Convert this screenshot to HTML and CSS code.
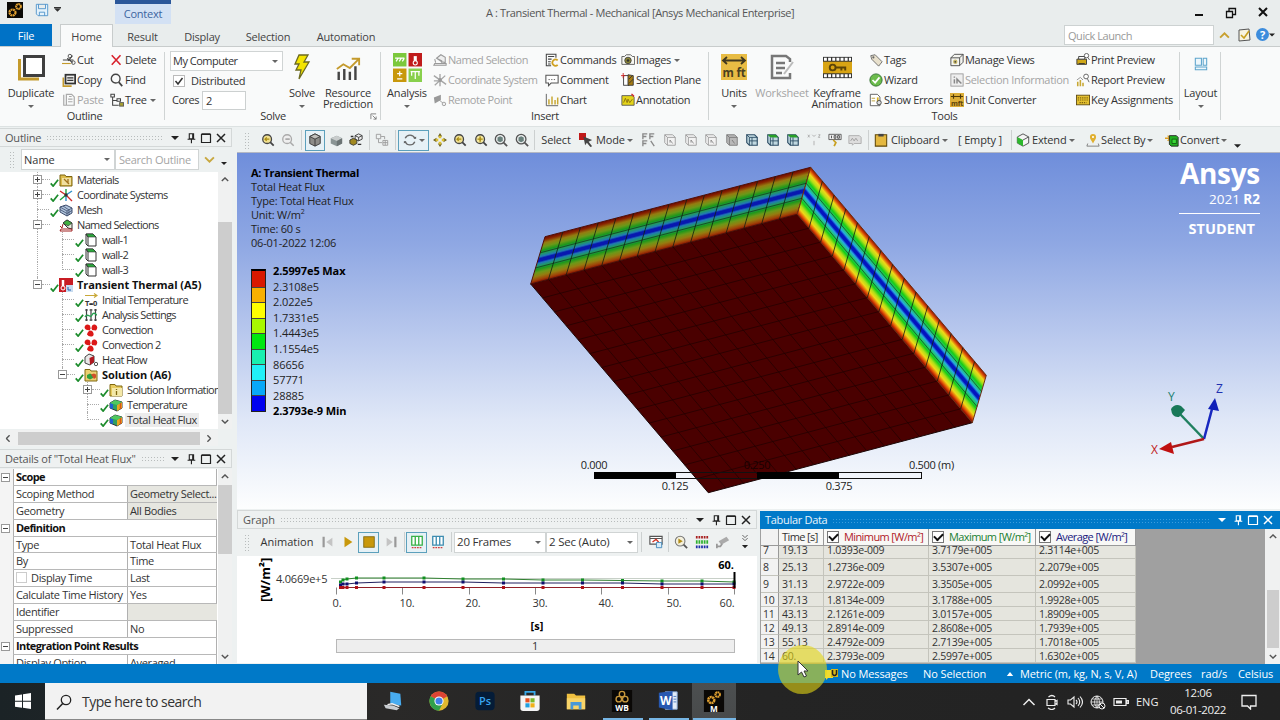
FILE: index.html
```html
<!DOCTYPE html>
<html lang="en">
<head>
    <meta charset="UTF-8">
    <meta name="viewport" content="width=device-width, initial-scale=1.0">
    <title>A : Transient Thermal - Mechanical</title>
    <link rel="stylesheet" href="styles.css">
</head>
<body>

<!-- icon set -->
<svg class="defs">
    <symbol id="gears" viewBox="0 0 16 16"><rect width="16" height="16" fill="#0b0a06"/><circle cx="5.5" cy="10.5" r="3" fill="none" stroke="#e0a030" stroke-width="2.2" stroke-dasharray="1.900 .5"/><circle cx="11.500" cy="4.500" r="2.400" fill="none" stroke="#e0a030" stroke-width="2" stroke-dasharray="1.600 .4"/></symbol>
    <symbol id="save" viewBox="0 0 16 16"><path d="M1.500 1.500h13v13h-11l-2-2zM4 1.500v5h8v-5M5 14.500v-4h6v4" fill="#e4f2fb" stroke="#4a90c8"/></symbol>
    <symbol id="caret" viewBox="0 0 8 4"><path d="M0 0h8L4 4z" fill="currentColor"/></symbol>
    <symbol id="pin" viewBox="0 0 12 14"><path d="M4 2h5v6H4zM2 8.500h9M6.500 8.500V13M8 2v6" fill="none" stroke="currentColor" stroke-width="1.300"/></symbol>
    <symbol id="max" viewBox="0 0 12 12"><path d="M1.500 2.500h9v8h-9zM1.500 1.800h9" fill="none" stroke="currentColor" stroke-width="1.200"/></symbol>
    <symbol id="close" viewBox="0 0 12 12"><path d="M2 2l8 8M10 2l-8 8" fill="none" stroke="currentColor" stroke-width="1.500"/></symbol>
    <symbol id="up" viewBox="0 0 10 6"><path d="M1 5l4-4 4 4" fill="none" stroke="currentColor" stroke-width="1.700"/></symbol>
    <symbol id="down" viewBox="0 0 10 6"><path d="M1 1l4 4 4-4" fill="none" stroke="currentColor" stroke-width="1.700"/></symbol>

    <symbol id="duplicate" viewBox="0 0 28 28"><path d="M2.500 6v20H22" fill="none" stroke="#c49a2c" stroke-width="3"/><rect x="7.500" y="3.500" width="19" height="19" fill="#fff" stroke="#3f3f3f" stroke-width="3"/></symbol>
    <symbol id="cut" viewBox="0 0 16 16"><path d="M1 8h12M6 6l6 5M12 3L7 9" stroke="#444" stroke-width="1.200"/><circle cx="9" cy="3.500" r="2" fill="none" stroke="#444"/><circle cx="13" cy="11" r="2" fill="none" stroke="#444"/><path d="M0 12h10" stroke="#c49a2c" stroke-width="1.300"/></symbol>
    <symbol id="copy" viewBox="0 0 16 16"><path d="M1.500 5v10H11" fill="none" stroke="#c49a2c" stroke-width="1.800"/><rect x="4" y="2" width="11" height="10" fill="#eee" stroke="#333" stroke-width="2"/><path d="M6 5.500h7M6 8.500h7" stroke="#333" stroke-width="1.500"/></symbol>
    <symbol id="paste" viewBox="0 0 16 16"><path d="M2 2v12h3M5 1.500h6l3 3V14H5z M7 7h5M7 10h5M8 4h3" fill="none" stroke="#aaa" stroke-width="1.400"/></symbol>
    <symbol id="delete" viewBox="0 0 16 16"><path d="M2 2.500l10 11M12 2.500l-10 11" stroke="#d8202c" stroke-width="1.800"/></symbol>
    <symbol id="find" viewBox="0 0 16 16"><circle cx="6.500" cy="6.500" r="5" fill="none" stroke="#444" stroke-width="1.600"/><path d="M10 10.500l4 4.500" stroke="#444" stroke-width="2"/></symbol>
    <symbol id="treeic" viewBox="0 0 16 16"><path d="M1 1.500h4v3H1zM3 5v9h7M3 8.500h5M8 6.500h4v3H8z" fill="none" stroke="#444" stroke-width="1.200"/><rect x="11" y="11" width="4.500" height="4" fill="#a8a030" stroke="#555"/></symbol>
    <symbol id="bolt" viewBox="0 0 20 28"><path d="M7 2h9l-4 7h5L7 26l2-9H4l3-6H3z" fill="#f4e400" stroke="#6c6a20" stroke-width="1.300"/></symbol>
    <symbol id="resource" viewBox="0 0 28 28"><path d="M4 27V18M10 27V15M16 27V18M22 27V12" stroke="#444" stroke-width="2.600"/><path d="M2 15l7-5 7 4 9-9M18 4h8v7" fill="none" stroke="#c49a2c" stroke-width="2"/></symbol>
    <symbol id="analysis" viewBox="0 0 28 28"><rect width="13" height="13" fill="#7cc83c"/><rect x="15" width="13" height="13" fill="#c01c1c"/><rect y="15" width="13" height="13" fill="#c8980c"/><rect x="15" y="15" width="13" height="13" fill="#88d04c"/><path d="M2 5h9M3 8l2-3M6 8l2-3M9 8l2-3M4 20h5M6.500 17.500v5M4 25h5M21.500 18v7M18 18v4M25 18v4M17 18h9" stroke="#fff" stroke-width="1.200"/><path d="M21.500 3v6" stroke="#fff" stroke-width="3"/><circle cx="21.500" cy="9.500" r="2" fill="#c01c1c" stroke="#fff"/></symbol>
    <symbol id="named" viewBox="0 0 16 16"><path d="M4 6l5-4 5 3v6l-4-1zM4 6l6 3v3M2 7l1 4M1 14h14v-2H2z" fill="#eee" stroke="#999" stroke-width="1.200"/></symbol>
    <symbol id="csys" viewBox="0 0 16 16"><path d="M1 3l14 10M8 1v14M2 14L14 3M1 9h5" stroke="#a5a5a5" stroke-width="1.500"/><circle cx="8" cy="8" r="2.200" fill="#999"/></symbol>
    <symbol id="remote" viewBox="0 0 16 16"><path d="M1 5l8-3v6l-7 4z" fill="#999"/><path d="M7 8l5 4" stroke="#999"/><circle cx="12.500" cy="12.500" r="2" fill="#eee" stroke="#999"/></symbol>
    <symbol id="commands" viewBox="0 0 16 16"><path d="M7 14.500H1.500v-13h11v4M3.500 4h7M3.500 7h4M3.500 10h3M3.500 12.500h3" fill="none" stroke="#444" stroke-width="1.200"/><path d="M14.500 8.500a3.500 3.500 0 1 0 0 5" fill="none" stroke="#cfa020" stroke-width="2"/></symbol>
    <symbol id="comment" viewBox="0 0 16 16"><path d="M1 2.500h14v9H7l-3 3v-3H1z" fill="#fff" stroke="#555" stroke-width="1.200"/><path d="M4 7.500h8" stroke="#555" stroke-dasharray="1.500 1.500"/></symbol>
    <symbol id="chart" viewBox="0 0 16 16"><path d="M1.500 1v13.500H15" fill="none" stroke="#555"/><path d="M4.500 13V7M8 13V4M11.500 13V8M14.500 13V5" stroke="#c8a834" stroke-width="1.700"/></symbol>
    <symbol id="camera" viewBox="0 0 16 16"><path d="M1 4h3l2-2h5l2 2h2.500v9H1z" fill="#f8f8f4" stroke="#555"/><circle cx="8" cy="8.500" r="3.700" fill="#8a8434" stroke="#444"/><circle cx="8" cy="8.500" r="1.500" fill="#333"/></symbol>
    <symbol id="section" viewBox="0 0 16 16"><rect x="3" y="3" width="6" height="11" fill="#fff" stroke="#333"/><path d="M8 2l6 1v11H8z" fill="#a87c10" stroke="#333"/><path d="M9 7l4-4M9 12l5-5" stroke="#333"/><path d="M0 3h5M2.500 0v6" stroke="#d02020"/></symbol>
    <symbol id="annot" viewBox="0 0 16 16"><path d="M1 3h12l2 2v9H1z" fill="#e4d418" stroke="#555"/><path d="M3 11l2-5 2 5 1-4 2 4 3-4" fill="none" stroke="#866c10"/><path d="M12 1l3 3" stroke="#d02020" stroke-width="1.500"/></symbol>
    <symbol id="units" viewBox="0 0 28 28"><rect width="26" height="26" x="1" y="1" fill="#e8bc44"/><path d="M3 7.500h22M7 4L3 7.500l4 3.500M21 4l4 3.500-4 3.500" fill="none" stroke="#403820" stroke-width="1.800"/><text x="14" y="24" text-anchor="middle" font-size="11.500" font-weight="700" fill="#4a4020">m ft</text></symbol>
    <symbol id="worksheet" viewBox="0 0 28 28"><path d="M22 9V6l-4-3H4v22h18v-5M8 10h9M8 15h9M8 20h6" fill="none" stroke="#777" stroke-width="2.500"/><path d="M16 21l9-12" stroke="#bbb" stroke-width="2"/></symbol>
    <symbol id="keyframe" viewBox="0 0 30 22"><rect width="30" height="22" fill="#333"/><path d="M1 2.500h28M1 19.500h28" stroke="#fff" stroke-width="3" stroke-dasharray="3 1.300"/><rect y="5" width="30" height="12" fill="#d8a414"/><circle cx="10" cy="11" r="3" fill="none" stroke="#5c4408" stroke-width="2"/><path d="M13 11h10v3M19 11v3" fill="none" stroke="#5c4408" stroke-width="2"/></symbol>
    <symbol id="tag" viewBox="0 0 16 16"><path d="M2 3l5-1 8 8-4 5-8-8z" fill="#e8e0cc" stroke="#666"/><circle cx="5" cy="5" r="1.200" fill="#666"/></symbol>
    <symbol id="wizard" viewBox="0 0 16 16"><circle cx="8" cy="8" r="7" fill="#6cbc4c" stroke="#2c6c2c"/><path d="M4 8l3 3 5-6" fill="none" stroke="#fff" stroke-width="2"/></symbol>
    <symbol id="errors" viewBox="0 0 16 16"><path d="M1.500 1.500h8l3 3v10h-11z" fill="#fff" stroke="#555"/><path d="M3 6h4M3 9h4" stroke="#b89828"/><path d="M10 5v5" stroke="#d8b020" stroke-width="2"/><circle cx="11.500" cy="11" r="2.500" fill="#ddd" stroke="#444"/></symbol>
    <symbol id="views" viewBox="0 0 16 16"><path d="M1 5.500h10v9H1zM1 5.500l4-4h10v9l-4 4M11 5.500l4-4" fill="#f4f4f0" stroke="#444"/><circle cx="6" cy="10" r="2.500" fill="#c8b868"/><circle cx="6" cy="10" r="1" fill="#444"/></symbol>
    <symbol id="selinfo" viewBox="0 0 16 16"><rect x="1" y="1" width="14" height="14" fill="#eee" stroke="#999"/><path d="M5 7v5M5 4v1.500M8 12V7l5 5" fill="none" stroke="#888" stroke-width="1.700"/></symbol>
    <symbol id="unitconv" viewBox="0 0 16 16"><rect width="16" height="16" fill="#dcae38"/><path d="M1 4h14M4 1.500v5M12 1.500v5" stroke="#4c3808" stroke-width="1.300"/><text x="8" y="14.500" font-size="8" font-weight="700" text-anchor="middle" fill="#5c440c">mft</text></symbol>
    <symbol id="print" viewBox="0 0 16 16"><path d="M1 7h11v6H1z" fill="#d0a818" stroke="#333"/><path d="M3 4h7v3H3zM3 12h7" fill="#fff" stroke="#333"/><circle cx="12" cy="3" r="2.500" fill="#fff" stroke="#555"/><path d="M13.500 5l2 3" stroke="#555"/></symbol>
    <symbol id="report" viewBox="0 0 16 16"><path d="M2 15v-5M5 15V8M8 15v-4" stroke="#c8a834" stroke-width="1.800"/><path d="M1 8l4-3 3 3" stroke="#888" fill="none"/><circle cx="11.500" cy="4" r="2.700" fill="#fff" stroke="#555"/><path d="M13 6.500l2 4" stroke="#555"/></symbol>
    <symbol id="keys" viewBox="0 0 16 16"><rect x=".5" y="2.500" width="15" height="11" fill="#e4c030" stroke="#5c4810"/><path d="M2 5.500h12M2 8h12M4 11h8" stroke="#80640c" stroke-width="1.300" stroke-dasharray="1.500 1"/></symbol>
    <symbol id="layout" viewBox="0 0 16 16"><path d="M1.500 1.500h7v8h-7zM10.500 1.500h4v8h-4zM1.500 11.500h13v3h-13z" fill="#eef7fc" stroke="#5ca4cc" stroke-width="1.200"/></symbol>

    <symbol id="zoomy" viewBox="0 0 16 16"><circle cx="7" cy="7" r="5" fill="#f0e090" stroke="#444" stroke-width="1.500"/><path d="M10.500 10.500l4 4" stroke="#444" stroke-width="2"/><path d="M9.500 7H4.500M6.500 5l-2 2 2 2" fill="none" stroke="#a88c10" stroke-width="1.300"/></symbol>
    <symbol id="zoomfit" viewBox="0 0 16 16"><circle cx="7" cy="7" r="5" fill="#f4e8a0" stroke="#444" stroke-width="1.500"/><path d="M10.500 10.500l4 4" stroke="#444" stroke-width="2"/><path d="M4 7h6M7 4v6" stroke="#a88c10" stroke-width="1.700"/></symbol>
    <symbol id="zoomg" viewBox="0 0 16 16"><circle cx="7" cy="7" r="5" fill="#eee" stroke="#aaa" stroke-width="1.500"/><path d="M10.500 10.500l4 4M5 7h5" stroke="#aaa" stroke-width="1.800"/></symbol>
    <symbol id="zoomb" viewBox="0 0 16 16"><circle cx="7" cy="7" r="5.500" fill="#e8ecec" stroke="#555" stroke-width="1.500"/><path d="M11 11l4 4" stroke="#555" stroke-width="2"/><path d="M4 5.200L7 3.700l3 1.500v3.800L7 10.500 4 9z" fill="#68807c"/></symbol>
    <symbol id="cubew" viewBox="0 0 16 16"><path d="M2 4l6-3 6 3v8l-6 3-6-3z" fill="#8c8c88" stroke="#333"/><path d="M2 4l6 3 6-3-6-3z" fill="#c0c0bc" stroke="#333"/><path d="M8 7v8" stroke="#333"/></symbol>
    <symbol id="cubes" viewBox="0 0 16 16"><path d="M2 6l7-3 6 3v6l-6 3-7-3z" fill="#8a9494"/><path d="M2 6l7-3 6 3-6 3z" fill="#c8cccc"/><path d="M9 9v6l6-3V6z" fill="#6c7474"/></symbol>
    <symbol id="cubeset" viewBox="0 0 16 16"><path d="M7 3l4-2 4 2v4l-4 2-4-2zM7 3l4 2 4-2M11 5v4" fill="#eee" stroke="#333"/><path d="M1 8l4-2 4 2v4l-4 2-4-2z" fill="#a08820" stroke="#333"/><path d="M10 13h4M2 4h3" stroke="#333" stroke-width="1.500"/></symbol>
    <symbol id="boxes" viewBox="0 0 16 16"><path d="M1.500 1.500h5v5h-5zM9 8.500h5.500V14H9zM9 11h5.500M11.700 8.500V14M7 4h4v3M4 7v4h4" fill="none" stroke="#999"/></symbol>
    <symbol id="rotate" viewBox="0 0 16 16"><path d="M2.500 6a6 6 0 0 1 11 0M13.500 10a6 6 0 0 1-11 0" fill="none" stroke="#666" stroke-width="1.500"/><path d="M12 6.500h3V4zM4 9.500H1V12z" fill="#555"/></symbol>
    <symbol id="pan" viewBox="0 0 16 16"><path d="M8 0l2.500 4h-5zM8 16l2.500-4h-5zM0 8l4-2.500v5zM16 8l-4-2.500v5z" fill="#6c6020"/><path d="M8 3v3M8 10v3M3 8h3M10 8h3" stroke="#dcc030" stroke-width="3"/></symbol>
    <symbol id="mode" viewBox="0 0 16 16"><rect width="8" height="8" fill="#c01818"/><path d="M5 4l10 4-4 2 4 5-2 1-4-5-2 3z" fill="#444"/></symbol>
    <symbol id="grid" viewBox="0 0 16 16"><path d="M1 7V1h5M1 4h4M9 7V1h5M9 4h4M1 15V9h5M1 12h4M10 9l4 6" fill="none" stroke="#888" stroke-width="1.500"/></symbol>
    <symbol id="sel" viewBox="0 0 16 16"><path d="M2 2h9l3 3v9H5L2 11zM2 2l3 3v9M5 5h9" fill="#f2f2f2" stroke="#999"/><path d="M8 8l3 4M8 8v3" stroke="#888"/></symbol>
    <symbol id="selg" viewBox="0 0 16 16"><path d="M2 2h9l3 3v9H5L2 11z" fill="#b8b8b8" stroke="#777"/><path d="M2 2l3 3v9M5 5h9M8 8l3 4" fill="none" stroke="#777"/></symbol>
    <symbol id="selb" viewBox="0 0 16 16"><path d="M2 2h9l3 3v9H5L2 11z" fill="#c0d8e0" stroke="#2c4c64" stroke-width="1.300"/><path d="M2 2l3 3v9M5 5h9M8 5v9M5 9h9" fill="none" stroke="#2c4c64"/></symbol>
    <symbol id="selgr" viewBox="0 0 16 16"><path d="M2 2h9l3 3v9H5L2 11z" fill="#c0d8e0" stroke="#2c4c64" stroke-width="1.300"/><path d="M2 2h9l3 3H5z" fill="#28a028"/><path d="M5 5v9M8 5v9M5 9h9" fill="none" stroke="#2c4c64"/></symbol>
    <symbol id="xyz" viewBox="0 0 16 16"><path d="M1 2l2 3M3 2L1 5M6 2l2 2 2-2M13 2h2l-2 3h2M8 9v5" fill="none" stroke="#aaa"/></symbol>
    <symbol id="probe" viewBox="0 0 16 16"><path d="M1 1.500h14v6H1z" fill="#eee" stroke="#555"/><path d="M4 3v3M7 3h2v3H7zM11 3h2v3h-2z" fill="none" stroke="#444"/><path d="M6 8l3 3-2 4" fill="none" stroke="#c8a020" stroke-width="2"/></symbol>
    <symbol id="abc" viewBox="0 0 16 16"><path d="M1 3h12l2 2v7H7l-2 2v-2H1z" fill="#ddd" stroke="#aaa"/><path d="M3 9l2-3 2 3 2-3 2 3" fill="none" stroke="#999"/></symbol>
    <symbol id="clip" viewBox="0 0 16 16"><path d="M1.500 2h13v13h-13z" fill="#e4b840" stroke="#604808" stroke-width="1.200"/><path d="M5 1h6v3H5z" fill="#444"/></symbol>
    <symbol id="extend" viewBox="0 0 16 16"><path d="M1.500 4.500L8 1l6.500 3.500v7L8 15l-6.500-3.500z" fill="#f4f4f4" stroke="#444"/><path d="M1.500 4.500L8 8v7l-6.500-3.500z" fill="#2cb82c"/><path d="M8 8l6.500-3.500" stroke="#444"/></symbol>
    <symbol id="place" viewBox="0 0 16 16"><path d="M8 12C6 8 4.500 7 4.500 4.500a3.500 3.500 0 0 1 7 0C11.500 7 10 8 8 12z" fill="#e0b030"/><circle cx="8" cy="4.500" r="1.200" fill="#fff"/><path d="M2 12l-1 3h14l-1-3" fill="none" stroke="#777"/></symbol>
    <symbol id="convert" viewBox="0 0 16 16"><path d="M0 6h5M3 3l3 3-3 3" fill="none" stroke="#e0a020" stroke-width="1.500"/><path d="M5 3h8l2 2v10H7l-2-2z" fill="#20b020" stroke="#222"/><path d="M8 7h5v5H8z" fill="#38d838" stroke="#135a13"/></symbol>

    <symbol id="check" viewBox="0 0 10 10"><path d="M.8 6l2.700 3L9 2" fill="none" stroke="#1c8c2c" stroke-width="1.900"/></symbol>
    <symbol id="folder" viewBox="0 0 14 14"><path d="M1 2h5l1 1.500h6V13H1z" fill="#dcbc4c" stroke="#7c6410"/><path d="M3 5h9v7H3z" fill="#f0e0a0"/><path d="M5 6l5 5M9 6v4" stroke="#a07420" stroke-width="1.300"/></symbol>
    <symbol id="csyscolor" viewBox="0 0 14 14"><path d="M7 7V1M7 7l-6 5" stroke="#20a040" stroke-width="1.400"/><path d="M7 7L1 3M7 7l6 6" stroke="#d02828" stroke-width="1.400"/><path d="M7 7l6-4M7 7v6" stroke="#3090c8" stroke-width="1.400"/><circle cx="7" cy="7" r="1.700" fill="#333"/></symbol>
    <symbol id="mesh" viewBox="0 0 14 14"><path d="M1 4l6-2 6 3v5l-5 3-7-4z" fill="#b0c4dc" stroke="#3c4c6c"/><path d="M1 4l7 4v5M8 8l5-3M4 3l6 4v5M1 6.500l7 4 5-3" fill="none" stroke="#3c4c6c" stroke-width=".8"/></symbol>
    <symbol id="nsel" viewBox="0 0 14 14"><path d="M4 5l4-3 5 3v6l-4-1z" fill="#e8f0e0" stroke="#333"/><path d="M4 5l5 3 4-3-5-3z" fill="#40b040" stroke="#333" stroke-width=".7"/><path d="M1 13h12v-2H2zM1 8l2 2 1-4" fill="none" stroke="#a02020"/></symbol>
    <symbol id="wall" viewBox="0 0 14 14"><path d="M2 1h7l3 3v9H4l-2-2z" fill="#fff" stroke="#333"/><path d="M2 1h7l3 3H4z" fill="#2ca83c" stroke="#333" stroke-width=".6"/><path d="M4 4v9M2 1l2 3" stroke="#333"/></symbol>
    <symbol id="thermal" viewBox="0 0 14 14"><rect width="14" height="14" fill="#c81c24"/><path d="M4 2v6" stroke="#fff" stroke-width="2.500"/><circle cx="4" cy="10" r="2" fill="#c81c24" stroke="#fff"/><path d="M7 7h7v7H7z" fill="#c8dcf0"/><path d="M9 9v3h3" stroke="#2060b0" fill="none"/></symbol>
    <symbol id="inittemp" viewBox="0 0 14 14"><path d="M1 2.500h11M10 .5l3 2-3 2" fill="none" stroke="#c8a838" stroke-width="1.200"/><text x="7" y="13" font-size="7.500" font-weight="700" text-anchor="middle" letter-spacing="-.3" fill="#333">T=0</text></symbol>
    <symbol id="settings" viewBox="0 0 14 14"><path d="M2.500 1v12M7 1v12M11.500 1v12M1 2h3M5.500 2h3M10 2h3M1 12h3M5.500 12h3M10 12h3" stroke="#444" stroke-width="1.200"/><path d="M1 9c3-5 5 2 7-2s4 0 5 0" fill="none" stroke="#28a050" stroke-width="1.400"/></symbol>
    <symbol id="fan" viewBox="0 0 14 14"><path d="M7 7Q1 8 .5 4 2 0 6 2.500zM7.500 7Q7 1 11 1.500q4 2 1 6zM7 7q4 3 2 6-4 1.500-6-1.500Q3.500 8 7 7z" fill="#dc1818"/><circle cx="7" cy="6.700" r="1" fill="#fff"/></symbol>
    <symbol id="heatflow" viewBox="0 0 14 14"><path d="M1 4l4-3 5 2v6l-4 3-5-2z" fill="#e8e8e8" stroke="#444"/><path d="M5.500 5L10 3v6l-4 3z" fill="#b01820"/><circle cx="12" cy="11" r="1.700" fill="none" stroke="#555"/></symbol>
    <symbol id="solution" viewBox="0 0 14 14"><path d="M1 1.500h5l1 1.500h6v10H1z" fill="#ecd070" stroke="#806810"/><path d="M3 7l3-1.500L9 7v3l-3 1.500L3 10z" fill="#30a040"/><path d="M7 6.500l3-1 2 1v3l-2 1.500z" fill="#d05028"/></symbol>
    <symbol id="solinfo" viewBox="0 0 14 14"><path d="M1 1.500h5l1 1.500h6v10H1z" fill="#e8cc60" stroke="#806810"/><path d="M3 5h10v8H3z" fill="#f4e8a8"/><path d="M7.500 8v4M7.500 6v1" stroke="#806810" stroke-width="1.300"/></symbol>
    <symbol id="result" viewBox="0 0 14 14"><path d="M1 5l5-3 7 2v6l-5 3-7-3z" fill="#30a060" stroke="#223" stroke-width=".9"/><path d="M8 7l5-3v6l-5 3z" fill="#e8a820"/><path d="M11.500 5v6" stroke="#d85818" stroke-width="1.500"/><path d="M1 5l3 1v5l-3-1z" fill="#2060d0"/><path d="M1 5l5-3 7 2-5 3z" fill="#50c860"/></symbol>

    <symbol id="bars" viewBox="0 0 16 16"><path d="M2 1.500h12v10H2zM6 1.500v10M10 1.500v10" fill="#fff" stroke="currentColor" stroke-width="1.500"/><path d="M2 14.500h12" stroke="#d04040" stroke-width="1.500" stroke-dasharray="2 1"/></symbol>
    <symbol id="film" viewBox="0 0 16 16"><path d="M1 1.500h14v9H1zM1 4h14" fill="#fff" stroke="#555" stroke-width="1.300"/><path d="M4 8l4-3 3 3" stroke="#d03020" fill="none" stroke-width="1.500"/><path d="M8.500 8.500h6v6h-6z" fill="#d8ecf8" stroke="#3c84b8"/></symbol>
    <symbol id="zoomplay" viewBox="0 0 16 16"><circle cx="7" cy="7" r="5.500" fill="#f4f0dc" stroke="#777" stroke-width="1.200"/><path d="M5 4l5 3-5 3z" fill="#b08c18"/><path d="M11 11l4 4" stroke="#555" stroke-width="2"/></symbol>
    <symbol id="rgb" viewBox="0 0 16 16"><path d="M1 2.500h14" stroke="#a82020" stroke-width="3" stroke-dasharray="2 1"/><path d="M1 8h14" stroke="#30b030" stroke-width="4" stroke-dasharray="2 1"/><path d="M1 13.500h14" stroke="#2030a8" stroke-width="3" stroke-dasharray="2 1"/></symbol>
    <symbol id="cctv" viewBox="0 0 16 16"><path d="M3 7l9-5 3 4-9 5z" fill="#aaa"/><path d="M7 10l-2 3H1M1 10v5" fill="none" stroke="#999" stroke-width="2"/></symbol>
</svg>

<header class="titlebar">
    <div class="quick">
        <svg class="app-icon"><use href="#gears"/></svg>
        <svg class="save-icon"><use href="#save"/></svg>
        <svg class="quick-caret"><use href="#caret"/></svg>
    </div>
    <div class="context">Context</div>
    <div class="title">A : Transient Thermal - Mechanical [Ansys Mechanical Enterprise]</div>
    <div class="window-buttons">
        <svg viewBox="0 0 12 12"><path d="M2 8h8" stroke="#111" stroke-width="2"/></svg>
        <svg viewBox="0 0 12 12"><path d="M1.500 4.500h6v6h-6zM4 4V1.500h6.500v6H8" fill="none" stroke="#111" stroke-width="1.300"/></svg>
        <svg viewBox="0 0 12 12"><path d="M2 1l8 8M10 1l-8 8" stroke="#111" stroke-width="2"/></svg>
    </div>
</header>

<nav class="tabs">
    <a class="file">File</a>
    <a class="active">Home</a>
    <a>Result</a>
    <a>Display</a>
    <a>Selection</a>
    <a>Automation</a>
    <div class="launch">Quick Launch</div>
    <div class="helpers">
        <svg class="h-up"><use href="#up"/></svg>
        <svg class="h-note" viewBox="0 0 14 14"><path d="M2 2l10-1 1 11-11 1z" fill="#f8f4e0" stroke="#555"/><path d="M4 7l3 3 5-7" fill="none" stroke="#c8a020" stroke-width="1.600"/></svg>
        <span class="help">?</span>
        <svg class="h-caret"><use href="#caret"/></svg>
    </div>
</nav>

<section class="ribbon">
    <div class="group outline-group">
        <div class="tools">
            <div class="big"><svg class="b28"><use href="#duplicate"/></svg><span>Duplicate</span><svg class="drop"><use href="#caret"/></svg></div>
            <div class="cmds">
                <div class="cmd"><svg><use href="#cut"/></svg>Cut</div>
                <div class="cmd"><svg><use href="#copy"/></svg>Copy</div>
                <div class="cmd off"><svg><use href="#paste"/></svg>Paste</div>
            </div>
            <div class="cmds">
                <div class="cmd"><svg><use href="#delete"/></svg>Delete</div>
                <div class="cmd"><svg><use href="#find"/></svg>Find</div>
                <div class="cmd"><svg><use href="#treeic"/></svg>Tree<svg class="mini"><use href="#caret"/></svg></div>
            </div>
        </div>
        <div class="caption">Outline</div>
    </div>
    <div class="group solve-group">
        <div class="tools">
            <div class="solve-form">
                <div class="combo">My Computer<svg class="mini"><use href="#caret"/></svg></div>
                <div class="dist"><span class="box"><svg viewBox="0 0 10 10"><path d="M1.500 5l2.500 3 4.500-6" fill="none" stroke="#333" stroke-width="1.500"/></svg></span>Distributed</div>
                <div class="cores">Cores<span class="field">2</span></div>
            </div>
            <div class="big"><svg class="b28"><use href="#bolt"/></svg><span>Solve</span><svg class="drop"><use href="#caret"/></svg></div>
            <div class="big"><svg class="b26"><use href="#resource"/></svg><span>Resource<br>Prediction</span></div>
        </div>
        <div class="caption">Solve</div>
        <svg class="launcher" viewBox="0 0 8 8"><path d="M1 7V1h6M3 3l4 4M7 4v3H4" fill="none" stroke="#777"/></svg>
    </div>
    <div class="group insert-group">
        <div class="tools">
            <div class="big"><svg class="b29"><use href="#analysis"/></svg><span>Analysis</span><svg class="drop"><use href="#caret"/></svg></div>
            <div class="cmds off">
                <div class="cmd"><svg><use href="#named"/></svg>Named Selection</div>
                <div class="cmd"><svg><use href="#csys"/></svg>Coordinate System</div>
                <div class="cmd"><svg><use href="#remote"/></svg>Remote Point</div>
            </div>
            <div class="cmds">
                <div class="cmd"><svg><use href="#commands"/></svg>Commands</div>
                <div class="cmd"><svg><use href="#comment"/></svg>Comment</div>
                <div class="cmd"><svg><use href="#chart"/></svg>Chart</div>
            </div>
            <div class="cmds">
                <div class="cmd"><svg><use href="#camera"/></svg>Images<svg class="mini"><use href="#caret"/></svg></div>
                <div class="cmd"><svg><use href="#section"/></svg>Section Plane</div>
                <div class="cmd"><svg><use href="#annot"/></svg>Annotation</div>
            </div>
        </div>
        <div class="caption">Insert</div>
    </div>
    <div class="group tools-group">
        <div class="tools">
            <div class="big"><svg class="b28"><use href="#units"/></svg><span>Units</span><svg class="drop"><use href="#caret"/></svg></div>
            <div class="big off"><svg class="b28"><use href="#worksheet"/></svg><span>Worksheet</span></div>
            <div class="big"><svg class="b29"><use href="#keyframe"/></svg><span>Keyframe<br>Animation</span></div>
            <div class="cmds">
                <div class="cmd"><svg><use href="#tag"/></svg>Tags</div>
                <div class="cmd"><svg><use href="#wizard"/></svg>Wizard</div>
                <div class="cmd"><svg><use href="#errors"/></svg>Show Errors</div>
            </div>
            <div class="cmds">
                <div class="cmd"><svg><use href="#views"/></svg>Manage Views</div>
                <div class="cmd off"><svg><use href="#selinfo"/></svg>Selection Information</div>
                <div class="cmd"><svg><use href="#unitconv"/></svg>Unit Converter</div>
            </div>
            <div class="cmds">
                <div class="cmd"><svg><use href="#print"/></svg>Print Preview</div>
                <div class="cmd"><svg><use href="#report"/></svg>Report Preview</div>
                <div class="cmd"><svg><use href="#keys"/></svg>Key Assignments</div>
            </div>
        </div>
        <div class="caption">Tools</div>
    </div>
    <div class="group layout-group">
        <div class="tools">
            <div class="big"><svg class="b14"><use href="#layout"/></svg><span>Layout</span><svg class="drop"><use href="#caret"/></svg></div>
        </div>
    </div>
</section>

<main class="work">
    <aside class="side">
        <div class="panel-head"><span>Outline</span><i class="dots"></i><svg class="p-caret"><use href="#caret"/></svg><svg><use href="#pin"/></svg><svg><use href="#max"/></svg><svg><use href="#close"/></svg></div>
        <div class="filter">
            <i class="grip"></i>
            <div class="combo">Name<svg class="mini"><use href="#caret"/></svg></div>
            <div class="search">Search Outline</div>
            <svg class="f-down"><use href="#down"/></svg>
            <svg class="f-caret"><use href="#caret"/></svg>
        </div>
        <div class="tree-wrap">
            <div class="tree">
                <div class="row"><i class="g line"><b class="plus"></b></i><svg class="ck"><use href="#check"/></svg><svg class="ti"><use href="#folder"/></svg><span>Materials</span></div>
                <div class="row"><i class="g line"><b class="plus"></b></i><svg class="ck"><use href="#check"/></svg><svg class="ti"><use href="#csyscolor"/></svg><span>Coordinate Systems</span></div>
                <div class="row"><i class="g line twig"></i><svg class="ck"><use href="#check"/></svg><svg class="ti"><use href="#mesh"/></svg><span>Mesh</span></div>
                <div class="row"><i class="g line"><b></b></i><svg class="ck"></svg><svg class="ti"><use href="#nsel"/></svg><span>Named Selections</span></div>
                <div class="row"><i class="g line"></i><i class="g line twig"></i><svg class="ck"><use href="#check"/></svg><svg class="ti"><use href="#wall"/></svg><span>wall-1</span></div>
                <div class="row"><i class="g line"></i><i class="g line twig"></i><svg class="ck"><use href="#check"/></svg><svg class="ti"><use href="#wall"/></svg><span>wall-2</span></div>
                <div class="row"><i class="g line"></i><i class="g line twig end"></i><svg class="ck"><use href="#check"/></svg><svg class="ti"><use href="#wall"/></svg><span>wall-3</span></div>
                <div class="row bold"><i class="g line end"><b></b></i><svg class="ck"><use href="#check"/></svg><svg class="ti"><use href="#thermal"/></svg><span>Transient Thermal (A5)</span></div>
                <div class="row"><i class="g"></i><i class="g line twig"></i><svg class="ck"><use href="#check"/></svg><svg class="ti"><use href="#inittemp"/></svg><span>Initial Temperature</span></div>
                <div class="row"><i class="g"></i><i class="g line twig"></i><svg class="ck"><use href="#check"/></svg><svg class="ti"><use href="#settings"/></svg><span>Analysis Settings</span></div>
                <div class="row"><i class="g"></i><i class="g line twig"></i><svg class="ck"><use href="#check"/></svg><svg class="ti"><use href="#fan"/></svg><span>Convection</span></div>
                <div class="row"><i class="g"></i><i class="g line twig"></i><svg class="ck"><use href="#check"/></svg><svg class="ti"><use href="#fan"/></svg><span>Convection 2</span></div>
                <div class="row"><i class="g"></i><i class="g line twig"></i><svg class="ck"><use href="#check"/></svg><svg class="ti"><use href="#heatflow"/></svg><span>Heat Flow</span></div>
                <div class="row bold"><i class="g"></i><i class="g line end"><b></b></i><svg class="ck"><use href="#check"/></svg><svg class="ti"><use href="#solution"/></svg><span>Solution (A6)</span></div>
                <div class="row"><i class="g"></i><i class="g"></i><i class="g line"><b class="plus"></b></i><svg class="ck"><use href="#check"/></svg><svg class="ti"><use href="#solinfo"/></svg><span>Solution Information</span></div>
                <div class="row"><i class="g"></i><i class="g"></i><i class="g line twig"></i><svg class="ck"><use href="#check"/></svg><svg class="ti"><use href="#result"/></svg><span>Temperature</span></div>
                <div class="row"><i class="g"></i><i class="g"></i><i class="g line twig end"></i><svg class="ck"><use href="#check"/></svg><svg class="ti"><use href="#result"/></svg><span class="picked">Total Heat Flux</span></div>
            </div>
            <div class="vscroll tree-scroll"><svg><use href="#up"/></svg><i></i><svg><use href="#down"/></svg></div>
        </div>
        <div class="hscroll"><svg class="left"><use href="#up"/></svg><i></i><svg class="right"><use href="#up"/></svg></div>
        <div class="panel-head details-head"><span>Details of "Total Heat Flux"</span><i class="dots"></i><svg class="p-caret"><use href="#caret"/></svg><svg><use href="#pin"/></svg><svg><use href="#max"/></svg><svg><use href="#close"/></svg></div>
        <div class="details-wrap">
            <div class="details">
                <div class="d-row head"><i><b></b></i><span>Scope</span></div>
                <div class="d-row"><i></i><span>Scoping Method</span><span class="ro">Geometry Select...</span></div>
                <div class="d-row"><i></i><span>Geometry</span><span class="ro">All Bodies</span></div>
                <div class="d-row head"><i><b></b></i><span>Definition</span></div>
                <div class="d-row"><i></i><span>Type</span><span>Total Heat Flux</span></div>
                <div class="d-row"><i></i><span>By</span><span>Time</span></div>
                <div class="d-row"><i></i><span><em></em>Display Time</span><span>Last</span></div>
                <div class="d-row"><i></i><span>Calculate Time History</span><span>Yes</span></div>
                <div class="d-row"><i></i><span>Identifier</span><span class="ro"></span></div>
                <div class="d-row"><i></i><span>Suppressed</span><span>No</span></div>
                <div class="d-row head"><i><b></b></i><span>Integration Point Results</span></div>
                <div class="d-row"><i></i><span>Display Option</span><span>Averaged</span></div>
            </div>
            <div class="vscroll details-scroll"><svg><use href="#up"/></svg><i></i><svg><use href="#down"/></svg></div>
        </div>
    </aside>

    <section class="stage">
        <div class="toolbar">
            <i class="grip"></i>
            <svg><use href="#zoomy"/></svg><svg><use href="#zoomg"/></svg><i class="sep"></i>
            <div class="on"><svg><use href="#cubew"/></svg></div><svg><use href="#cubes"/></svg><svg><use href="#cubeset"/></svg><i class="sep"></i>
            <svg><use href="#boxes"/></svg><i class="sep"></i>
            <div class="on"><svg><use href="#rotate"/></svg><svg class="mini"><use href="#caret"/></svg></div>
            <svg><use href="#pan"/></svg><svg><use href="#zoomy"/></svg><svg><use href="#zoomfit"/></svg><svg><use href="#zoomb"/></svg><svg><use href="#zoomb"/></svg><i class="sep"></i>
            <span class="mid">Select</span><svg><use href="#mode"/></svg><span>Mode<svg class="mini"><use href="#caret"/></svg></span>
            <svg><use href="#grid"/></svg><svg><use href="#sel"/></svg><svg><use href="#sel"/></svg><svg><use href="#sel"/></svg><svg><use href="#selg"/></svg><svg><use href="#selb"/></svg><svg><use href="#selgr"/></svg><svg><use href="#selgr"/></svg><svg><use href="#xyz"/></svg><svg><use href="#probe"/></svg><svg><use href="#abc"/></svg><i class="sep"></i>
            <svg><use href="#clip"/></svg><span>Clipboard<svg class="mini"><use href="#caret"/></svg></span><span>[ Empty ]</span><i class="sep"></i>
            <svg><use href="#extend"/></svg><span>Extend<svg class="mini"><use href="#caret"/></svg></span>
            <svg><use href="#place"/></svg><span>Select By<svg class="mini"><use href="#caret"/></svg></span>
            <svg><use href="#convert"/></svg><span>Convert<svg class="mini"><use href="#caret"/></svg></span>
            <svg class="more"><use href="#caret"/></svg>
        </div>

        <div class="viewport">
            <svg class="scene" viewBox="237 153 1043 356">
                <defs>
                    <linearGradient id="faceLeft" gradientUnits="userSpaceOnUse" x1="545" y1="236.700" x2="555.650" y2="277.500">
                        <stop offset="0" stop-color="#6c0800"/><stop offset=".06" stop-color="#882400"/><stop offset=".14" stop-color="#947c10"/><stop offset=".22" stop-color="#6c9818"/><stop offset=".3" stop-color="#1c981c"/><stop offset=".37" stop-color="#209868"/><stop offset=".43" stop-color="#2078b4"/><stop offset=".47" stop-color="#0818b0"/>
                        <stop offset=".53" stop-color="#0818b0"/><stop offset=".57" stop-color="#2078b4"/><stop offset=".63" stop-color="#209868"/><stop offset=".7" stop-color="#1c981c"/><stop offset=".78" stop-color="#6c9818"/><stop offset=".86" stop-color="#947c10"/><stop offset=".94" stop-color="#a04408"/><stop offset="1" stop-color="#881000"/>
                    </linearGradient>
                    <linearGradient id="faceRight" gradientUnits="userSpaceOnUse" x1="810.700" y1="167.300" x2="779.700" y2="193.500">
                        <stop offset="0" stop-color="#901000"/><stop offset=".06" stop-color="#d84c08"/><stop offset=".13" stop-color="#f0d818"/><stop offset=".2" stop-color="#b0e018"/><stop offset=".28" stop-color="#18cc18"/><stop offset=".36" stop-color="#20c878"/><stop offset=".42" stop-color="#28a8e0"/><stop offset=".47" stop-color="#0414c0"/>
                        <stop offset=".53" stop-color="#0414c0"/><stop offset=".58" stop-color="#28a8e0"/><stop offset=".64" stop-color="#20c878"/><stop offset=".72" stop-color="#18cc18"/><stop offset=".8" stop-color="#b0e018"/><stop offset=".87" stop-color="#f0d818"/><stop offset=".94" stop-color="#e45c08"/><stop offset="1" stop-color="#a01000"/>
                    </linearGradient>
                </defs>
                <polygon points="530.700,284 797.300,214.300 972.300,422.700 708.300,492.700" fill="#4a0000" stroke="#1c0808"/>
                <polygon points="545,236.700 810.700,167.300 797.300,214.300 530.700,284" fill="url(#faceLeft)" stroke="#501008"/>
                <polygon points="810.700,167.300 986.300,375.300 972.300,422.700 797.300,214.300" fill="url(#faceRight)" stroke="#703010"/>
                <path id="mesh-bottom" class="mesh-dark"/>
                <path id="mesh-sides" class="mesh-lines"/>
                <path id="mesh-layers" class="mesh-lines thin"/>

                <!-- scale bar -->
                <rect x="594.500" y="472.500" width="327" height="6" fill="none" stroke="#111"/>
                <rect x="594" y="472" width="82" height="7" fill="#000"/>
                <rect x="757" y="472" width="82" height="7" fill="#000"/>
                <g class="scale-text">
                    <text x="594" y="469" text-anchor="middle">0.000</text>
                    <text x="757" y="469" text-anchor="middle" fill="#180000">0.250</text>
                    <text x="909" y="469">0.500 (m)</text>
                    <text x="675" y="490" text-anchor="middle">0.125</text>
                    <text x="839" y="490" text-anchor="middle">0.375</text>
                </g>

                <!-- axis triad -->
                <path d="M1204 439l-24-25" stroke="#208060" stroke-width="2.500"/>
                <path d="M1204 439l8-30" stroke="#1828c0" stroke-width="2.500"/>
                <path d="M1204 439l-32 8" stroke="#b01818" stroke-width="2.500"/>
                <path d="M1215 398l4 13-11-2z" fill="#1020b8"/>
                <path d="M1171 409q4-6 10-3l4 4-6 7q-7 1-8-8z" fill="#187858"/>
                <path d="M1159 449l12-7 3 12z" fill="#c01010"/>
                <text x="1216" y="393" font-size="12" fill="#2030b0">Z</text>
                <text x="1168" y="401" font-size="12" fill="#208070">Y</text>
                <text x="1151" y="454" font-size="12" fill="#c02020">X</text>
            </svg>
            <div class="legend">
                <strong>A: Transient Thermal</strong>
                <div>Total Heat Flux</div>
                <div>Type: Total Heat Flux</div>
                <div>Unit: W/m<sup>2</sup></div>
                <div>Time: 60 s</div>
                <div>06-01-2022 12:06</div>
                <div class="scale">
                    <div class="colors"><i class="c1"></i><i class="c2"></i><i class="c3"></i><i class="c4"></i><i class="c5"></i><i class="c6"></i><i class="c7"></i><i class="c8"></i><i class="c9"></i></div>
                    <div class="values"><b>2.5997e5 Max</b><span>2.3108e5</span><span>2.022e5</span><span>1.7331e5</span><span>1.4443e5</span><span>1.1554e5</span><span>86656</span><span>57771</span><span>28885</span><b>2.3793e-9 Min</b></div>
                </div>
            </div>
            <div class="brand">
                <div class="logo">Ansys</div>
                <div class="version">2021 <b>R2</b></div>
                <div class="edition">STUDENT</div>
            </div>
        </div>

        <div class="bottom">
            <div class="graph">
                <div class="panel-head"><span>Graph</span><i class="dots"></i><svg class="p-caret"><use href="#caret"/></svg><svg><use href="#pin"/></svg><svg><use href="#max"/></svg><svg><use href="#close"/></svg></div>
                <div class="anim">
                    <i class="grip"></i><span>Animation</span>
                    <svg viewBox="0 0 16 16"><path d="M3 2v12" stroke="#999" stroke-width="2.500"/><path d="M13 3v10L6 8z" fill="#c4c4c4"/></svg>
                    <svg viewBox="0 0 16 16"><path d="M4 2v12l9-6z" fill="#c8980c"/></svg>
                    <div class="on"><svg viewBox="0 0 16 16"><rect x="2" y="2" width="12" height="12" fill="#c8980c" stroke="#806810"/></svg></div>
                    <svg viewBox="0 0 16 16"><path d="M13 2v12" stroke="#999" stroke-width="2.500"/><path d="M3 3v10l7-5z" fill="#c4c4c4"/></svg>
                    <i class="sep"></i>
                    <div class="on green"><svg><use href="#bars"/></svg></div>
                    <svg class="teal"><use href="#bars"/></svg>
                    <i class="sep"></i>
                    <div class="combo">20 Frames<svg class="mini"><use href="#caret"/></svg></div>
                    <div class="combo">2 Sec (Auto)<svg class="mini"><use href="#caret"/></svg></div>
                    <i class="sep"></i>
                    <svg><use href="#film"/></svg>
                    <i class="sep"></i>
                    <svg><use href="#zoomplay"/></svg><svg><use href="#rgb"/></svg><svg><use href="#cctv"/></svg>
                    <svg viewBox="0 0 16 16"><path d="M5 0l3 3 3-3M5 3.500l3 3 3-3" fill="none" stroke="#555"/><path d="M4.500 11.500h7l-3.500 3.500z" fill="#222"/></svg>
                </div>
                <svg class="plot" viewBox="237 556 520 107">
                    <path d="M331 578.500H735" stroke="#c8d0c8"/>
                    <path d="M336.500 587.500v7M402.500 587.500v7M469.500 587.500v7M535.500 587.500v7M601.500 587.500v7M668.500 587.500v7M734.500 587.500v7" stroke="#888"/>
                    <path id="line-max" class="s-max"/><path id="line-avg" class="s-avg"/><path id="line-min" class="s-min"/>
                    <g id="marks"></g>
                    <path d="M734.500 572v16" stroke="#000" stroke-width="2"/>
                    <g class="plot-text">
                        <text x="276" y="583">4.0669e+5</text>
                        <text x="337" y="607" text-anchor="middle">0.</text><text x="407" y="607" text-anchor="middle">10.</text><text x="473" y="607" text-anchor="middle">20.</text><text x="540" y="607" text-anchor="middle">30.</text><text x="606" y="607" text-anchor="middle">40.</text><text x="674" y="607" text-anchor="middle">50.</text><text x="727" y="607" text-anchor="middle">60.</text>
                    </g>
                    <g class="plot-bold">
                        <text x="726" y="569" text-anchor="middle">60.</text>
                        <text x="537" y="630" text-anchor="middle">[s]</text>
                        <text class="y-label" transform="translate(270 602) rotate(-90)">[W/m²]</text>
                    </g>
                    <rect x="336.500" y="639.500" width="398" height="13" fill="#eeeeee" stroke="#b8b8b8"/>
                    <text class="plot-text" x="535" y="650" text-anchor="middle">1</text>
                </svg>
            </div>
            <div class="tabular">
                <div class="panel-head blue"><span>Tabular Data</span><i class="dots"></i><svg class="p-caret"><use href="#caret"/></svg><svg><use href="#pin"/></svg><svg><use href="#max"/></svg><svg><use href="#close"/></svg></div>
                <div class="table-wrap">
                    <div class="data">
                        <div class="t-row t-head"><span></span><span>Time [s]</span><span class="c-min"><i></i>Minimum [W/m²]</span><span class="c-max"><i></i>Maximum [W/m²]</span><span class="c-avg"><i></i>Average [W/m²]</span></div>
                        <div class="t-row first"><span>7</span><span>19.13</span><span>1.0393e-009</span><span>3.7179e+005</span><span>2.3114e+005</span></div>
                        <div class="t-row tall"><span>8</span><span>25.13</span><span>1.2736e-009</span><span>3.5307e+005</span><span>2.2079e+005</span></div>
                        <div class="t-row tall"><span>9</span><span>31.13</span><span>2.9722e-009</span><span>3.3505e+005</span><span>2.0992e+005</span></div>
                        <div class="t-row"><span>10</span><span>37.13</span><span>1.8134e-009</span><span>3.1788e+005</span><span>1.9928e+005</span></div>
                        <div class="t-row"><span>11</span><span>43.13</span><span>2.1261e-009</span><span>3.0157e+005</span><span>1.8909e+005</span></div>
                        <div class="t-row"><span>12</span><span>49.13</span><span>2.8914e-009</span><span>2.8608e+005</span><span>1.7939e+005</span></div>
                        <div class="t-row"><span>13</span><span>55.13</span><span>2.4792e-009</span><span>2.7139e+005</span><span>1.7018e+005</span></div>
                        <div class="t-row"><span>14</span><span>60.</span><span>2.3793e-009</span><span>2.5997e+005</span><span>1.6302e+005</span></div>
                    </div>
                    <div class="vscroll table-scroll"><svg><use href="#up"/></svg><i></i><svg><use href="#down"/></svg></div>
                </div>
            </div>
        </div>
    </section>
</main>

<footer class="status">
    <svg class="msg" viewBox="0 0 14 14"><path d="M0 3h8v8H3l-2 2v-2H0z" fill="#f0dc30"/><path d="M6 2h7v8H6z" fill="#d8b818"/><path d="M7.500 3v4q2 3 4 0V3" fill="none" stroke="#222" stroke-width="1.500"/></svg>
    <span class="s1">No Messages</span><span class="s2">No Selection</span><svg class="s-up" viewBox="0 0 8 5"><path d="M0 5h8L4 0z" fill="#fff"/></svg><span class="s3">Metric (m, kg, N, s, V, A)</span><span class="s4">Degrees</span><span class="s5">rad/s</span><span>Celsius</span>
</footer>

<div class="taskbar">
    <div class="start"><svg viewBox="0 0 16 16"><path d="M0 2.500l7-1v6.200H0zM8 1.300L16 0v7.700H8zM0 8.700h7v6.100l-7-1zM8 8.700h8V16l-8-1.200z" fill="#fff"/></svg></div>
    <div class="find"><svg viewBox="0 0 16 16"><circle cx="10" cy="6" r="4.700" fill="none" stroke="#222" stroke-width="1.300"/><path d="M6.700 9.500L1 15.500" stroke="#222" stroke-width="1.500"/></svg>Type here to search</div>
    <div class="apps">
        <div class="app"><svg viewBox="0 0 24 24"><path d="M9 2l11 2 1 13-12-2z" fill="#48acf0"/><path d="M2 16l10 1 7 3-3 2-12-2z" fill="#c8ccd0"/><path d="M6 16l5-1 8 3" stroke="#eee" stroke-width="1.500" fill="none"/></svg></div>
        <div class="app"><svg viewBox="0 0 24 24"><circle cx="12" cy="12" r="10.500" fill="#e0b830"/><path d="M12 12L2.900 6.800A10.500 10.500 0 0 1 21.100 6.800z" fill="#dc4434"/><path d="M12 12L2.900 6.800A10.500 10.500 0 0 0 12 22.500l4-8z" fill="#30a04c"/><circle cx="12" cy="12" r="5" fill="#fff"/><circle cx="12" cy="12" r="3.900" fill="#4080e8"/></svg></div>
        <div class="app"><svg viewBox="0 0 24 24"><rect x="1.500" y="2" width="21" height="20" rx="4" fill="#041c38"/><text x="12" y="16.500" text-anchor="middle" font-size="12" font-weight="600" fill="#38a4f0">Ps</text></svg></div>
        <div class="app"><svg viewBox="0 0 24 24"><path d="M7 6V2h10v4" fill="none" stroke="#38a8e8" stroke-width="2"/><path d="M1.500 6h21v14q0 3-3 3h-15q-3 0-3-3z" fill="#f4f4f4"/><path d="M7 9h4.500v4.500H7z" fill="#e85020"/><path d="M12.500 9H17v4.500h-4.500z" fill="#78b828"/><path d="M7 14.500h4.500V19H7z" fill="#20a0e0"/><path d="M12.500 14.500H17V19h-4.500z" fill="#f0b018"/></svg></div>
        <div class="app"><svg viewBox="0 0 24 24"><path d="M2 4h8l2 2h10v15H2z" fill="#f0c040"/><path d="M2 9h20v12H2z" fill="#f8d468"/><path d="M6 21v-8h12v8h-3v-4H9v4z" fill="#4898d8"/></svg></div>
        <div class="app run"><svg viewBox="0 0 24 24"><rect x="1" width="22" height="24" fill="#0a0806"/><g fill="none" stroke="#c8983c" stroke-width="1.500"><circle cx="12" cy="4.500" r="3"/><circle cx="8.500" cy="10" r="3"/><circle cx="15.500" cy="10" r="3"/></g><text x="12" y="23" text-anchor="middle" font-size="9" font-weight="700" fill="#fff">WB</text></svg></div>
        <div class="app run"><svg viewBox="0 0 24 24"><path d="M9 2h13v19H9z" fill="#e4ecf8" stroke="#88a8d8"/><path d="M18 7h3M18 10h3M18 13h3" stroke="#4878c0"/><path d="M2 3l15-2v21L2 19z" fill="#2858b0"/><text x="9.500" y="16" text-anchor="middle" font-size="13" font-weight="700" fill="#fff">W</text></svg></div>
        <div class="app run current"><svg viewBox="0 0 24 24"><rect x="1" width="22" height="24" fill="#0a0806"/><circle cx="9" cy="11" r="3.300" fill="none" stroke="#e0a030" stroke-width="2.700" stroke-dasharray="2.200 .5"/><circle cx="16" cy="5" r="2.500" fill="none" stroke="#e0a030" stroke-width="2.200" stroke-dasharray="1.700 .4"/><text x="12" y="23.500" text-anchor="middle" font-size="9" font-weight="700" fill="#fff">M</text></svg></div>
    </div>
    <div class="tray">
        <svg viewBox="0 0 16 16"><path d="M2.500 11L8 5.500l5.500 5.500" fill="none" stroke="#eee" stroke-width="1.500"/></svg>
        <svg viewBox="0 0 16 16"><path d="M3 5.500h8v6H3zM11 7.500l2-1v4l-2-1M4.500 3Q8 0 11 3M4 14q4 3 7 0" fill="none" stroke="#eee" stroke-width="1.200"/></svg>
        <svg viewBox="0 0 16 16"><path d="M1 6h2.500L7 3v10l-3.500-3H1zM9 6q2 2 0 4M11 4q3.500 4 0 8M13 2.500q5 5.500 0 11" fill="none" stroke="#eee" stroke-width="1.100"/></svg>
        <svg viewBox="0 0 16 16"><circle cx="7" cy="8" r="6" fill="none" stroke="#eee"/><path d="M1 8h12M7 2v12M2 5h10M2 11h8M7 2Q2 8 7 14M7 2q5 6 0 12" fill="none" stroke="#eee" stroke-width=".8"/><circle cx="12" cy="12" r="3" fill="#222" stroke="#eee"/><path d="M10 10l4 4" stroke="#eee"/></svg>
        <svg viewBox="0 0 16 16"><path d="M1 4.500h12v7H1zM14 6.500h1.500v3H14z" fill="none" stroke="#eee" stroke-width="1.200"/><path d="M3 6.500h6v3H3z" fill="#eee"/></svg>
        <span class="lang">ENG</span>
        <div class="clock">12:06<br>06-01-2022</div>
        <svg class="note" viewBox="0 0 16 16"><path d="M1 1.500h14v10.500H9.500v3l-3-3H1z" fill="none" stroke="#eee" stroke-width="1.300"/></svg>
    </div>
</div>

<!-- pointer -->
<div class="halo"></div>
<svg class="pointer" viewBox="0 0 12 18"><path d="M1 1v14l3.500-3 2.500 5 2.500-1-2.500-5H11z" fill="#fff" stroke="#333"/></svg>

<script>
    // point between a and b
    function lerp(a, b, t) {
        return [a[0] + (b[0] - a[0]) * t, a[1] + (b[1] - a[1]) * t];
    }

    // lines joining edge a-b with edge c-d at the given fractions
    function rules(a, b, c, d, fractions) {
        return fractions.map(t => "M" + lerp(a, b, t) + "L" + lerp(c, d, t)).join("");
    }

    const A = [545, 236.7], B = [810.7, 167.3], C = [530.7, 284], D = [797.3, 214.3];
    const E = [986.3, 375.3], F = [972.3, 422.7], G = [708.3, 492.7];
    const cells = Array.from({ length: 14 }, (v, i) => (i + 1) / 15);
    const layers = [0.34, 0.66];

    document.getElementById("mesh-bottom").setAttribute("d",
        rules(C, D, G, F, cells) + rules(C, G, D, F, cells));
    document.getElementById("mesh-sides").setAttribute("d",
        rules(A, B, C, D, cells) + rules(B, E, D, F, cells));
    document.getElementById("mesh-layers").setAttribute("d",
        rules(A, C, B, D, layers) + rules(B, D, E, F, layers));

    // time history curves
    const xs = [340.5, 343, 347, 356.5, 384, 424, 463, 503.5, 543, 582.5, 622.5, 662, 702, 734];
    const series = {
        max: [582, 580, 579, 578, 578, 578, 579, 579, 580, 580, 580.5, 581, 581, 582],
        avg: [585, 584, 584, 583, 582, 582, 582, 583, 583, 583, 583, 584, 584, 584],
        min: xs.map(() => 587.5)
    };
    const marks = document.getElementById("marks");
    Object.keys(series).forEach(name => {
        document.getElementById("line-" + name).setAttribute("d",
            "M" + xs.map((x, i) => x + " " + series[name][i]).join("L"));
        xs.forEach((x, i) => {
            const m = document.createElementNS("http://www.w3.org/2000/svg", "rect");
            m.setAttribute("x", x - 1.5);
            m.setAttribute("y", series[name][i] - 1.5);
            m.setAttribute("width", 3);
            m.setAttribute("height", 3);
            m.setAttribute("class", "m-" + name);
            marks.appendChild(m);
        });
    });
</script>
</body>
</html>
```

FILE: styles.css
```css
* {
    box-sizing: border-box;
}
body {
    margin: 0;
    width: 1280px;
    height: 720px;
    overflow: hidden;
    display: flex;
    flex-direction: column;
    position: relative;
    font-family: "Open Sans", "Noto Sans", sans-serif;
    font-size: 11px;
    line-height: 14px;
    color: #333;
    background: #edf1f1;
    white-space: nowrap;
}
svg {
    display: block;
    flex: none;
}
i, em {
    font-style: normal;
    display: block;
}
.defs {
    display: none;
}

/* title bar */
.titlebar {
    height: 24px;
    display: flex;
    background: #e9eded;
    flex: none;
}
.quick {
    width: 115px;
    display: flex;
    padding: 2px 0 0 7px;
}
.app-icon {
    width: 16px;
    height: 16px;
}
.save-icon {
    width: 14px;
    height: 14px;
    margin: 1px 0 0 12px;
}
.quick-caret {
    width: 7px;
    height: 5px;
    margin: 5px 0 0 5px;
    border-top: 1px solid #333;
}
.context {
    width: 56px;
    height: 24px;
    border-top: 4px solid #2b579a;
    background: #d3e1f4;
    color: #3c64a0;
    text-align: center;
    line-height: 20px;
    letter-spacing: -0.2px;
}
.title {
    flex: 1;
    padding-left: 315px;
    line-height: 26px;
    color: #555;
    letter-spacing: -0.38px;
}
.window-buttons {
    display: flex;
    gap: 20px;
    padding: 7px 11px 0 0;
}
.window-buttons svg {
    width: 12px;
    height: 12px;
}

/* ribbon tabs */
.tabs {
    height: 23px;
    display: flex;
    flex: none;
    background: #e9eded;
    border-bottom: 1px solid #c8cccc;
    letter-spacing: -0.2px;
}
.tabs a {
    line-height: 25px;
    color: #444;
    text-align: center;
    width: 62px;
}
.tabs .file {
    width: 52px;
    height: 22px;
    background: #0072c6;
    color: #fff;
    line-height: 23px;
    margin-right: 8px;
}
.tabs .active {
    width: 53px;
    height: 23px;
    background: #f9fafa;
    border: 1px solid #c8cccc;
    border-bottom: 0;
    line-height: 23px;
}
.tabs a:nth-child(3) { width: 59px; }
.tabs a:nth-child(4) { width: 60px; }
.tabs a:nth-child(5) { width: 72px; }
.tabs a:nth-child(6) { width: 84px; }
.launch {
    margin: 1px 0 0 auto;
    width: 150px;
    height: 20px;
    border: 1px solid #cdd2d2;
    background: #fff;
    color: #999;
    padding-left: 3px;
    line-height: 19px;
    letter-spacing: -0.45px;
}
.helpers {
    display: flex;
    width: 66px;
    padding: 4px 0 0 5px;
}
.h-up {
    width: 11px;
    height: 7px;
    color: #c8a030;
    margin-top: 4px;
}
.h-note {
    width: 14px;
    height: 14px;
    margin: 0 5px 0 7px;
}
.help {
    width: 13px;
    height: 13px;
    border-radius: 50%;
    background: #3c8cdc;
    color: #fff;
    font-weight: 700;
    text-align: center;
    line-height: 13px;
}
.h-caret {
    width: 6px;
    height: 4px;
    margin-top: 5px;
    color: #222;
}

/* ribbon */
.ribbon {
    height: 80px;
    flex: none;
    display: grid;
    grid-template-columns: 165px 216px 328px 471px 41px;
    background: #f9fafa;
    border-bottom: 1px solid #dde2e2;
    padding-top: 3px;
}
.group {
    position: relative;
    color: #333;
}
.group::after {
    content: "";
    position: absolute;
    right: 0;
    top: 2px;
    height: 68px;
    border-right: 1px solid #d0d4d4;
}
.tools {
    display: grid;
    height: 60px;
}
.outline-group .tools { grid-template-columns: 62px 48px 54px; }
.solve-group .tools { grid-template-columns: 118px 38px 54px; }
.insert-group .tools { grid-template-columns: 52px 112px 76px 88px; }
.tools-group .tools { grid-template-columns: 50px 46px 64px 81px 126px 103px; }
.layout-group .tools { grid-template-columns: 41px; }
.caption {
    text-align: center;
    line-height: 11px;
    letter-spacing: -0.3px;
}
.outline-group .caption { padding-left: 4px; }
.cmds {
    display: grid;
    grid-template-rows: 20px 20px 20px;
    letter-spacing: -0.3px;
}
.insert-group .off {
    letter-spacing: -0.45px;
}
.cmd {
    display: flex;
    align-items: center;
}
.cmd svg {
    width: 14px;
    height: 14px;
    margin-right: 1px;
}
.off {
    color: #a4a4a4;
}
.cmd .mini, .mini {
    width: 6px;
    height: 3px;
    margin: 0 0 0 3px;
    color: #666;
}
.big {
    display: flex;
    flex-direction: column;
    align-items: center;
    text-align: center;
    line-height: 11px;
    height: 60px;
    position: relative;
    padding-top: 37px;
    letter-spacing: -0.2px;
}
.big svg {
    position: absolute;
    top: 3px;
}
.big .b28 { width: 28px; height: 28px; }
.big .b26 { width: 26px; height: 26px; top: 5px; }
.big .b29 { width: 29px; height: 29px; }
.big .b14 { width: 14px; height: 14px; top: 7px; }
.big .drop {
    width: 6px;
    height: 3px;
    top: 55px;
    color: #666;
}
.solve-form {
    padding: 1px 0 0 5px;
    letter-spacing: -0.3px;
}
.combo {
    display: flex;
    align-items: center;
    justify-content: space-between;
    background: #fff;
    border: 1px solid #d0d4d4;
    padding: 0 4px 0 2px;
    height: 20px;
}
.solve-form .combo {
    width: 113px;
    letter-spacing: -0.5px;
}
.dist {
    display: flex;
    align-items: center;
    height: 19px;
    gap: 6px;
    padding-left: 3px;
}
.box {
    width: 12px;
    height: 12px;
    border: 1px solid #bbb;
    background: #fff;
}
.box svg {
    width: 10px;
    height: 10px;
}
.cores {
    display: flex;
    align-items: center;
    height: 20px;
    padding-left: 2px;
    letter-spacing: -0.5px;
}
.field {
    width: 44px;
    height: 19px;
    border: 1px solid #ccd0d0;
    background: #fff;
    margin-left: auto;
    margin-right: 37px;
    padding-left: 3px;
    line-height: 18px;
}
.launcher {
    position: absolute;
    right: 4px;
    top: 63px;
    width: 7px;
    height: 7px;
}

/* work area */
.work {
    height: 537px;
    flex: none;
    display: flex;
}
.side {
    width: 237px;
    padding: 1px 5px 0 0;
}
.panel-head {
    display: flex;
    align-items: center;
    height: 19px;
    padding: 0 4px 0 5px;
    background: #eef1f1;
    border: 1px solid #d4d8d8;
    border-left: 0;
    color: #555;
}
.side .panel-head {
    letter-spacing: -0.2px;
}
.panel-head .dots {
    flex: 1;
    height: 5px;
    margin: 0 7px 0 5px;
    background: radial-gradient(circle, #b8bcbc 0.7px, transparent 0.9px) 0 0 / 3px 3px;
}
.panel-head svg {
    width: 12px;
    height: 12px;
    margin-left: 3px;
    color: #222;
}
.panel-head .p-caret {
    width: 8px;
    height: 4px;
    margin: 0 3px 0 0;
}
.filter {
    display: flex;
    height: 25px;
    align-items: center;
    padding-left: 9px;
}
.grip {
    width: 6px;
    height: 17px;
    background: radial-gradient(circle, #b8bcbc 0.7px, transparent 0.9px) 0 0 / 3px 3px;
}
.filter .combo {
    width: 94px;
    margin-left: 6px;
    height: 21px;
}
.search {
    width: 84px;
    height: 21px;
    border: 1px solid #d0d4d4;
    background: #fff;
    color: #a4a4a4;
    padding-left: 3px;
    line-height: 19px;
    letter-spacing: -0.25px;
}
.f-down {
    width: 11px;
    height: 7px;
    margin-left: 5px;
    color: #c8a840;
}
.f-caret {
    width: 6px;
    height: 3px;
    margin: 8px 0 0 6px;
    color: #222;
}
.tree-wrap {
    display: flex;
    height: 257px;
}
.tree {
    width: 218px;
    overflow: hidden;
    background: #fff;
    padding-left: 25px;
}
.row {
    display: flex;
    align-items: center;
    height: 15px;
    font-size: 11px;
    letter-spacing: -0.65px;
}
.row span {
    margin-left: 4px;
    line-height: 14px;
}
.row.bold {
    font-weight: 700;
    color: #111;
    letter-spacing: -0.05px;
}
.row .picked {
    background: #ececec;
    padding: 0 2px;
    margin-left: 2px;
    letter-spacing: -0.45px;
}
.g {
    width: 25px;
    height: 15px;
    position: relative;
    flex: none;
}
.line::before {
    content: "";
    position: absolute;
    left: 12px;
    top: 0;
    bottom: 0;
    border-left: 1px dotted #aaa;
}
.line.end::before {
    bottom: 7px;
}
.twig::after, .g b::after {
    content: "";
    position: absolute;
    left: 12px;
    top: 7px;
    width: 12px;
    border-top: 1px dotted #aaa;
}
.g b, .d-row b {
    position: absolute;
    left: 8px;
    top: 3px;
    width: 9px;
    height: 9px;
    border: 1px solid #999;
    background: linear-gradient(#444, #444) center / 5px 1px no-repeat #fff;
}
.g .plus {
    background: linear-gradient(#444, #444) center / 5px 1px no-repeat, linear-gradient(#444, #444) center / 1px 5px no-repeat #fff;
}
.g b::after {
    left: 8px;
    top: 3px;
    width: 8px;
}
.ck {
    width: 9px;
    height: 9px;
    margin-top: 6px;
}
.ti {
    width: 14px;
    height: 14px;
}
.vscroll {
    width: 14px;
    display: flex;
    flex-direction: column;
    align-items: center;
    justify-content: space-between;
    background: #f0f1f1;
    color: #555;
    padding: 5px 0;
}
.vscroll svg {
    width: 8px;
    height: 5px;
}
.vscroll i {
    width: 14px;
    background: #cdcdcd;
}
.tree-scroll i { height: 192px; margin-top: 35px; }
.hscroll {
    display: flex;
    align-items: center;
    justify-content: space-between;
    height: 16px;
    width: 218px;
    margin-top: 1px;
    padding: 0 5px 0 4px;
    background: #f0f1f1;
    color: #555;
}
.hscroll i {
    width: 182px;
    height: 13px;
    background: #cdcdcd;
}
.hscroll svg {
    width: 8px;
    height: 5px;
}
.left { transform: rotate(-90deg); }
.right { transform: rotate(90deg); }
.details-head {
    margin-top: 3px;
}
.details-wrap {
    display: flex;
    height: 195px;
    margin-top: 1px;
    overflow: hidden;
}
.details {
    width: 218px;
    background: #fff;
    color: #333;
    letter-spacing: -0.35px;
}
.d-row {
    display: grid;
    grid-template-columns: 13px 114px 90px;
    height: 16.9px;
    line-height: 16px;
    border-bottom: 1px solid #b8b8b8;
    width: 217px;
    border-right: 1px solid #b0b0b0;
}
.d-row span {
    border-left: 1px solid #b0b0b0;
    padding-left: 2px;
    overflow: hidden;
    display: flex;
}
.d-row .ro {
    background: #e6e6e0;
}
.d-row > i {
    position: relative;
    margin-bottom: -1px;
    background: #f4f4f4;
}
.d-row b {
    left: 1px;
    top: 4px;
}
.d-row em {
    width: 11px;
    height: 11px;
    border: 1px solid #ccc;
    margin: 2px 4px 0 0;
}
.head {
    font-weight: 700;
    color: #111;
    letter-spacing: -0.6px;
}
.head span {
    grid-column: 2 / 4;
}
.details-scroll i { height: 69px; margin-bottom: 94px; }

/* graphics toolbar */
.stage {
    width: 1043px;
}
.toolbar {
    height: 26px;
    padding-top: 1px;
    display: grid;
    align-items: center;
    justify-items: center;
    grid-template-columns: 20px 21px 20px 7px 20px 21px 20px 6px 20px 6px 31px 21px 20px 21px 20px 21px 5px 38px 21px 43px 20px 21px 21px 20px 21px 20px 21px 20px 21px 21px 20px 6px 20px 67px 51px 4px 19px 52px 17px 63px 16px 54px 12px;
    border-bottom: 1px solid #b4b8c4;
    color: #333;
    letter-spacing: -0.15px;
}
.toolbar svg, .anim svg {
    width: 14px;
    height: 14px;
}
.toolbar span {
    display: flex;
    align-items: center;
    justify-self: start;
}
.toolbar .mid {
    justify-self: center;
}
.toolbar .mini, .anim .mini {
    width: 6px;
    height: 3px;
    margin-left: 2px;
}
.toolbar .more {
    width: 7px;
    height: 4px;
    margin-top: 11px;
    margin-right: 5px;
    color: #222;
}
.sep {
    width: 1px;
    height: 20px;
    background: #ccd0d0;
}
.on {
    width: 100%;
    height: 21px;
    border: 1px solid #5ca0bc;
    background: #e6f1f6;
    display: flex;
    align-items: center;
    justify-content: center;
}

/* 3D view */
.viewport {
    height: 356px;
    position: relative;
    background: linear-gradient(#6f8edb, #8ea7e3 25%, #b7c7ed 50%, #dfe7f7 75%, #fdfefe);
}
.scene {
    position: absolute;
    left: 0;
    top: 0;
    width: 1043px;
    height: 356px;
}
.mesh-dark {
    fill: none;
    stroke: #200000;
    stroke-width: 0.7;
}
.mesh-lines {
    fill: none;
    stroke: #102010;
    stroke-width: 0.8;
}
.thin {
    stroke-width: 0.6;
}
.scale-text {
    font-size: 11px;
    fill: #222;
    letter-spacing: -0.3px;
}
.legend {
    position: relative;
    width: 130px;
    padding: 13px 0 0 14px;
    color: #222;
    line-height: 14px;
    letter-spacing: -0.2px;
}
.legend > div, .legend > strong {
    display: block;
    height: 14px;
}
.legend strong, .legend b {
    color: #000;
}
.legend strong {
    letter-spacing: -0.35px;
}
.legend sup {
    font-size: 7px;
    line-height: 0;
}
.legend .scale {
    display: flex;
    height: 160px;
    padding-top: 13px;
    letter-spacing: -0.1px;
}
.colors {
    width: 15px;
    height: 143px;
    margin-top: 6px;
    border: 1px solid #222;
    border-top: 2px solid #000;
    display: grid;
    grid-template-rows: repeat(9, 1fr);
}
.colors i + i {
    border-top: 1px solid #444;
}
.c1 { background: #d81800; }
.c2 { background: #f8b000; }
.c3 { background: #ffff00; }
.c4 { background: #a8f800; }
.c5 { background: #00e810; }
.c6 { background: #18f0b0; }
.c7 { background: #20f0f8; }
.c8 { background: #08a8f8; }
.c9 { background: #0000f0; }
.values {
    display: flex;
    flex-direction: column;
    padding-left: 7px;
    line-height: 15.6px;
}
.brand {
    position: absolute;
    right: 20px;
    top: 6px;
    width: 81px;
    color: #fff;
    text-align: right;
}
.logo {
    font-size: 28px;
    font-weight: 700;
    line-height: 29px;
    letter-spacing: -0.3px;
}
.version {
    font-size: 13.5px;
    line-height: 22px;
    padding-bottom: 3px;
    border-bottom: 1px solid #fff;
}
.edition {
    font-size: 14.5px;
    font-weight: 700;
    line-height: 29px;
    padding-right: 5px;
}

/* bottom panels */
.bottom {
    display: flex;
    height: 155px;
    padding-top: 1px;
}
.graph {
    width: 520px;
    margin-right: 3px;
    background: #eef1f1;
}
.graph .panel-head {
    border-left: 1px solid #d4d8d8;
}
.anim {
    height: 26px;
    margin-bottom: 1px;
    display: grid;
    align-items: center;
    justify-items: center;
    grid-template-columns: 20px 60px 21px 20px 21px 23px 4px 21px 21px 6px 92px 92px 7px 21px 4px 22px 20px 22px 22px;
}
.anim .on {
    width: 21px;
}
.anim .combo {
    width: 100%;
    font-size: 11.5px;
    height: 21px;
    letter-spacing: -0.2px;
}
.green { color: #38b048; }
.teal { color: #3c8cb0; }
.plot {
    width: 520px;
    height: 107px;
    background: #fff;
}
.plot-text {
    font-size: 11px;
    fill: #333;
    letter-spacing: -0.2px;
}
.plot-bold {
    font-size: 11px;
    font-weight: 700;
    fill: #000;
}
.y-label {
    font-size: 13px;
}
.s-max, .s-avg, .s-min {
    fill: none;
    stroke-width: 1;
}
.s-max { stroke: #308030; }
.s-avg { stroke: #202060; }
.s-min { stroke: #902028; }
.m-max { fill: #109020; }
.m-avg { fill: #101070; }
.m-min { fill: #b01018; }

.tabular {
    width: 520px;
    padding-top: 1px;
}
.panel-head.blue {
    height: 18px;
    background: #0079c8;
    border-color: #0079c8;
    color: #e8f4fc;
    letter-spacing: -0.3px;
    padding-right: 5px;
}
.blue svg {
    color: #fff;
}
.blue .dots {
    background: radial-gradient(circle, #3c9cdc 0.7px, transparent 0.9px) 0 0 / 3px 3px;
}
.table-wrap {
    display: flex;
    height: 135px;
    background: #a0a0a0;
    overflow: hidden;
}
.data {
    width: 376px;
    padding-left: 1px;
}
.t-row {
    display: grid;
    grid-template-columns: 18px 45px 105px 107px 100px;
    height: 14px;
    line-height: 15px;
    font-size: 10.5px;
    letter-spacing: -0.25px;
    color: #333;
    background: #e5e5de;
}
.t-row span {
    border-right: 1px solid #c4c4bc;
    border-bottom: 1px solid #c4c4bc;
    padding-left: 3px;
    overflow: hidden;
}
.t-row span:first-child {
    background: #f2f2f2;
    padding-left: 2px;
    border-right-color: #999;
}
.t-row.tall {
    height: 17px;
    line-height: 16px;
}
.t-row.first {
    height: 13px;
    line-height: 8px;
}
.t-row.t-head {
    height: 17px;
    line-height: 16px;
    background: #f8f8f6;
    font-size: 11px;
    letter-spacing: -0.6px;
}
.t-head span {
    display: flex;
    align-items: center;
    border-color: #999;
}
.t-head i {
    width: 12px;
    height: 12px;
    border: 1px solid #777;
    background: #fff;
    margin: 0 5px 0 0;
    position: relative;
}
.t-head i::after {
    content: "";
    position: absolute;
    left: 1px;
    top: 1px;
    width: 7px;
    height: 4px;
    border-left: 2px solid #111;
    border-bottom: 2px solid #111;
    transform: rotate(-45deg);
}
.c-min { color: #b02028; }
.c-max { color: #208030; }
.c-avg { color: #202080; }
.table-scroll {
    width: 15px;
    margin-left: auto;
}
.table-scroll i { height: 58px; width: 12px; margin-top: 45px; }

/* status bar */
.status {
    height: 19px;
    flex: none;
    display: flex;
    align-items: center;
    background: #0079c8;
    color: #fff;
    padding-left: 825px;
    letter-spacing: -0.1px;
}
.msg {
    width: 14px;
    height: 14px;
    margin-right: 2px;
}
.s1 { width: 82px; }
.s2 { width: 83px; }
.s-up { width: 8px; height: 4px; margin-right: 6px; }
.s3 { width: 130px; }
.s4 { width: 51px; }
.s5 { width: 37px; }

/* taskbar */
.taskbar {
    height: 37px;
    flex: none;
    display: flex;
    background: linear-gradient(90deg, #1b2326, #2a2928 30%, #242424 60%, #222);
    color: #eee;
    font-size: 12px;
}
.start {
    width: 45px;
    padding: 10px 0 0 15px;
}
.start svg {
    width: 16px;
    height: 16px;
}
.find {
    width: 322px;
    background: #f2f2f2;
    color: #333;
    font-size: 14px;
    display: flex;
    align-items: center;
    padding: 1px 0 0 11px;
    gap: 10px;
    letter-spacing: -0.5px;
    border-bottom: 1px solid #888;
}
.find svg {
    width: 16px;
    height: 16px;
}
.apps {
    display: flex;
    margin-left: 4px;
}
.app {
    width: 45.8px;
    height: 37px;
    padding: 7px 0 0 11px;
    position: relative;
}
.app svg {
    width: 22px;
    height: 22px;
}
.run::after {
    content: "";
    position: absolute;
    left: 3px;
    right: 3px;
    bottom: 0;
    height: 2px;
    background: #76b5e4;
}
.current {
    background: linear-gradient(#4c4f50, #484a4b) center / 44px 100% no-repeat;
}
.current::after {
    left: 1px;
    right: 1px;
}
.tray {
    margin-left: auto;
    display: flex;
    align-items: center;
    gap: 7px;
    width: 259px;
    height: 37px;
}
.tray svg {
    width: 16px;
    height: 16px;
}
.lang {
    width: 26px;
    font-size: 11px;
}
.clock {
    text-align: center;
    line-height: 17px;
    font-size: 11.5px;
    width: 58px;
    letter-spacing: -0.4px;
    padding-bottom: 2px;
}
.tray .note {
    margin-left: 7px;
}

/* mouse pointer */
.halo {
    position: absolute;
    left: 778px;
    top: 645px;
    width: 49px;
    height: 49px;
    border-radius: 50%;
    background: rgba(226, 214, 20, 0.6);
}
.pointer {
    position: absolute;
    left: 797px;
    top: 660px;
    width: 12px;
    height: 18px;
}
```
